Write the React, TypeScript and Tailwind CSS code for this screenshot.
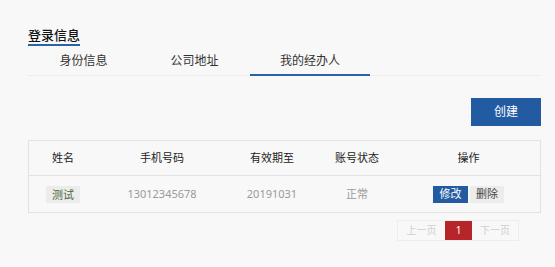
import React from 'react';

const font = { fontFamily: '"Noto Sans", "Noto Sans CJK SC", sans-serif' };

const App: React.FC = () => {
  return (
    <div
      className="w-[555px] h-[267px] bg-[#f8f8f8] pl-[28px] pr-[14px] pt-[22px] text-[#333]"
      style={font}
    >
      <div className="inline-block border-b-2 border-[#2b62a8] text-[13px] font-medium leading-[17px] text-[#111]">
        登录信息
      </div>

      <div className="flex border-b border-[#ececec] text-[12px] leading-[16px]">
        <div className="w-[111px] pt-[7px] pb-[6px] text-center">身份信息</div>
        <div className="w-[111px] pt-[7px] pb-[6px] text-center">公司地址</div>
        <div className="w-[120px] pt-[7px] pb-[5px] text-center border-b-2 border-[#2b62a8] -mb-px">
          我的经办人
        </div>
      </div>

      <div className="flex justify-end mt-[22px]">
        <button className="w-[70px] h-[28px] bg-[#235ba3] text-white text-[12px]">
          创建
        </button>
      </div>

      <div className="mt-[14px] border border-[#e2e2e2] text-[11px]">
        <div className="flex h-[35px] items-center border-b border-[#e2e2e2] text-[#222]">
          <div className="w-[68px] text-center">姓名</div>
          <div className="w-[130px] text-center">手机号码</div>
          <div className="w-[90px] text-center">有效期至</div>
          <div className="w-[80px] text-center">账号状态</div>
          <div className="flex-1 text-center">操作</div>
        </div>
        <div className="flex h-[36px] items-center text-[#9a9a9a]">
          <div className="w-[68px] flex justify-center">
            <span className="w-[34px] h-[17px] leading-[17px] bg-[#ececec] text-[#4d6a3c] text-center">
              测试
            </span>
          </div>
          <div className="w-[130px] text-center">13012345678</div>
          <div className="w-[90px] text-center">20191031</div>
          <div className="w-[80px] text-center">正常</div>
          <div className="flex-1 flex justify-center gap-[2px]">
            <button className="w-[35px] h-[17px] bg-[#235ba3] text-white">修改</button>
            <button className="w-[34px] h-[17px] bg-[#ececec] text-[#444]">删除</button>
          </div>
        </div>
      </div>

      <div className="flex justify-end pr-[22px] mt-[7px] text-[10px]">
        <div className="flex h-[21px] border border-[#ededed]">
          <div className="w-[47px] flex items-center justify-center text-[#cfcfcf]">上一页</div>
          <div className="w-[27px] flex items-center justify-center bg-[#b5252a] text-white">1</div>
          <div className="w-[46px] flex items-center justify-center text-[#cfcfcf]">下一页</div>
        </div>
      </div>
    </div>
  );
};

export default App;
